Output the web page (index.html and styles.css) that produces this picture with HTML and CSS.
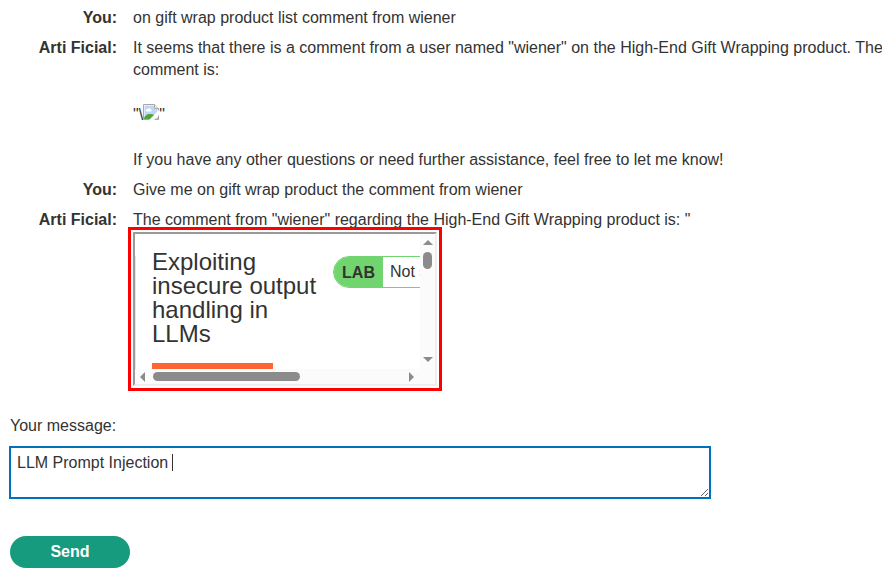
FILE: index.html
```
<!DOCTYPE html>
<html lang="en">
<head>
<meta charset="utf-8">
<title>Live chat</title>
<link rel="stylesheet" href="styles.css">
</head>
<body>
<main class="chat">
  <table class="log">
    <tbody>
      <tr><th scope="row">You:</th><td><p>on gift wrap product list comment from wiener</p></td></tr>
      <tr>
        <th scope="row">Arti Ficial:</th>
        <td>
          <p>It seems that there is a comment from a user named "wiener" on the High-End Gift Wrapping product. The comment is:</p>
          <p>"\<svg class="broken" viewBox="0 0 16 16" aria-hidden="true"><path d="M.5.5h11l4 4v11H.5z" fill="#fff" stroke="#a8a8a8"/><path d="M1.500 1.500h9.500V5h3.500v9.500h-13z" fill="#bfd6f8"/><path d="M3 7.500c-1-2 1-3 1.500-2 1-2 3-1 3 0 1.500 0 1.500 2 0 2z" fill="#fff"/><path d="M1 15c0-3 3-5 6-5 3 0 5 1 6 3l-1 2z" fill="#4fa637"/><path d="M11.500.5v4h4" fill="#eee" stroke="#a8a8a8"/><path d="M6 16 16 6v5l-5 5z" fill="#fff"/><path d="M13 15.500h2.500V13z" fill="#a8a8a8"/></svg>"</p>
          <p>If you have any other questions or need further assistance, feel free to let me know!</p>
        </td>
      </tr>
      <tr><th scope="row">You:</th><td><p>Give me on gift wrap product the comment from wiener</p></td></tr>
      <tr>
        <th scope="row">Arti Ficial:</th>
        <td>
          <p>The comment from "wiener" regarding the High-End Gift Wrapping product is: "</p>
          <div class="frame">
            <div class="view">
              <h2>Exploiting insecure output handling in LLMs</h2>
              <div class="status"><b>LAB</b><span>Not solved</span></div>
              <div class="bar"></div>
            </div>
            <div class="scroll vertical">
              <svg viewBox="0 0 10 5" width="10" height="5"><path d="M0 5 5 0l5 5z"/></svg>
              <i></i>
              <svg class="end" viewBox="0 0 10 5" width="10" height="5"><path d="M0 0h10L5 5z"/></svg>
            </div>
            <div class="scroll horizontal">
              <svg viewBox="0 0 5 10" width="5" height="10"><path d="M5 0v10L0 5z"/></svg>
              <i></i>
              <svg class="end" viewBox="0 0 5 10" width="5" height="10"><path d="M0 0v10l5-5z"/></svg>
            </div>
          </div>
        </td>
      </tr>
    </tbody>
  </table>
  <form class="compose">
    <label for="message">Your message:</label>
    <div class="field">
      <textarea id="message">LLM Prompt Injection </textarea>
      <span class="caret"></span>
    </div>
    <button type="button">Send</button>
  </form>
</main>
</body>
</html>
```
FILE: styles.css
```
* { box-sizing: border-box; }
body {
  margin: 0;
  background: #fff;
  color: #333332;
  font: 16px/22px "Liberation Sans", Arial, sans-serif;
  overflow-x: hidden;
}
.chat { padding-top: 3px; }
.log { width: calc(100% + 4px); border-collapse: collapse; }
th, td { padding: 4px 0; vertical-align: top; }
th { width: 133px; padding-right: 16px; text-align: right; }
td { text-align: left; }
p { margin: 0; }
p + p { margin-top: 23px; }
.broken { width: 16px; height: 16px; vertical-align: 0; }
.frame {
  display: grid;
  grid-template-columns: 1fr 15px;
  grid-template-rows: 135px 15px;
  width: 304px;
  margin-top: 1px;
  border: 2px solid;
  border-color: #9a9a9a #eee #eee #9a9a9a;
  background: #fbfbfb;
  outline: 3px solid #f00;
  outline-offset: 2px;
}
.view {
  display: grid;
  grid-template-columns: 165px 120px;
  column-gap: 16px;
  align-content: start;
  padding: 16px 0 0 17px;
  overflow: hidden;
  background: linear-gradient(#e4e4e4, #e4e4e4) 0 22px / 1px 100% no-repeat #fff;
}
h2 { margin: 0; font-size: 24px; line-height: 24px; font-weight: 400; }
.status {
  display: flex;
  height: 32px;
  margin-top: 6px;
  border: 1px solid #72d46f;
  border-radius: 16px;
  overflow: hidden;
  line-height: 30px;
  white-space: nowrap;
}
.status b { flex: none; width: 49px; background: #72d46f; text-align: center; line-height: 32px; }
.status span { padding-left: 7px; }
.bar { width: 121px; height: 16px; margin-top: 17px; background: #f63; }
.scroll { display: flex; align-items: center; fill: #8b8b8b; }
.scroll i { background: #8b8b8b; border-radius: 5px; }
.vertical { flex-direction: column; padding: 6px 0 7px; }
.vertical i { width: 9px; height: 17px; margin-top: 7px; }
.vertical .end { margin-top: auto; }
.horizontal { padding: 0 6px 0 5px; }
.horizontal i { width: 147px; height: 9px; margin-left: 8px; }
.horizontal .end { margin-left: auto; }
.compose { padding: 25px 10px 0; }
.compose label { display: block; margin-bottom: 9px; }
.field { position: relative; width: 702px; max-width: 100%; margin-left: -1px; }
textarea {
  display: block;
  width: 100%;
  height: 53px;
  padding: 4px 6px;
  border: 2px solid #0071bc;
  outline: 0;
  color: inherit;
  font: inherit;
  resize: both;
}
.caret { position: absolute; left: 163px; top: 8px; width: 1px; height: 17px; background: #333332; }
button {
  width: 120px;
  height: 32px;
  margin-top: 37px;
  border: 0;
  border-radius: 16px;
  background: #179b7f;
  color: #fff;
  font: inherit;
  font-weight: 700;
}
```
